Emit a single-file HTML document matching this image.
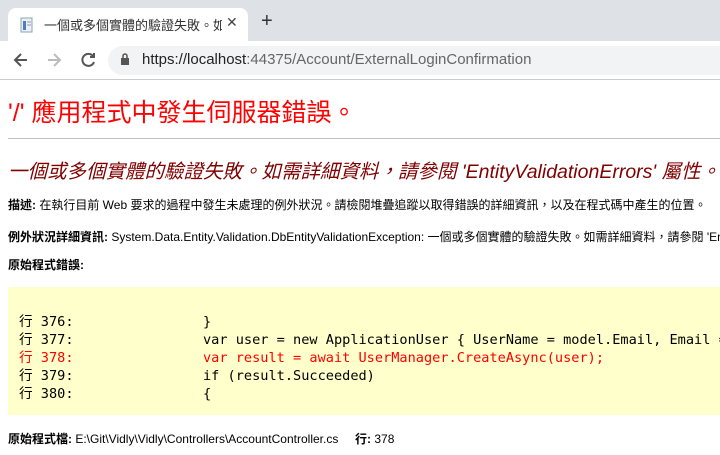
<!DOCTYPE html>
<html><head><meta charset="utf-8"><style>
*{margin:0;padding:0;box-sizing:border-box}
html,body{width:720px;height:455px;overflow:hidden}
body{background:#fff;font-family:"Liberation Sans","Noto Sans CJK TC",sans-serif;position:relative}
#wrap{position:absolute;left:0;top:0;width:720px;height:455px;overflow:hidden}
.abs{position:absolute;white-space:nowrap}
.tabbar{position:absolute;left:0;top:0;width:720px;height:41px;background:#dee1e6}
.tab{position:absolute;left:8px;top:8px;width:240px;height:33px;background:#fff;border-radius:8px 8px 0 0}
.toolbar{position:absolute;left:0;top:41px;width:720px;height:39px;background:#fff;border-bottom:1px solid #ccc}
.omni{position:absolute;left:108px;top:46px;width:640px;height:29px;background:#f1f3f4;border-radius:15px}
.mono{font-family:"DejaVu Sans Mono","Liberation Mono","Noto Sans CJK TC",monospace;font-size:13.6px}
b{font-weight:bold}
</style></head><body><div id="wrap">
<div class="tabbar"></div>
<div class="tab"></div>
<svg class="abs" style="left:20px;top:17px" width="14" height="16"><rect x="1" y="1" width="11" height="14" fill="#eef" stroke="#8aa" /><rect x="3" y="4" width="3" height="9" fill="#4a7fc0"/><line x1="7" y1="5" x2="11" y2="5" stroke="#999"/><line x1="7" y1="8" x2="11" y2="8" stroke="#999"/></svg>
<div class="abs" style="left:44px;top:15px;font-size:13px;color:#333;width:178px;overflow:hidden">一個或多個實體的驗證失敗。如需</div>
<div class="abs" style="left:226px;top:14px;font-size:14px;color:#444">✕</div>
<div class="abs" style="left:261px;top:10px;font-size:20px;color:#333">+</div>
<div class="toolbar"></div>
<svg class="abs" style="left:12px;top:51px" width="90" height="18" fill="none" stroke-width="2">
<path d="M15 9H3M9 3L3 9l6 6" stroke="#555"/>
<path d="M36 9h12M42 3l6 6-6 6" stroke="#bbb"/>
<path d="M81 5a6 6 0 1 0 1 6M82 2v4h-4" stroke="#555"/>
</svg>
<div class="omni"></div>
<svg class="abs" style="left:120px;top:53px" width="10" height="13"><rect x="1" y="5" width="8" height="7" fill="#555"/><path d="M3 5V3a2 2 0 0 1 4 0v2" stroke="#555" fill="none" stroke-width="1.5"/></svg>
<div class="abs" style="left:142px;top:51px;font-size:15px;color:#222">https://localhost<span style="color:#666">:44375/Account/ExternalLoginConfirmation</span></div>

<div class="abs" style="left:8px;top:93px;font-size:25px;color:#f00">'/' 應用程式中發生伺服器錯誤。</div>
<div class="abs" style="left:8px;top:138px;width:712px;height:1px;background:#c0c0c0"></div>
<div class="abs" style="left:8px;top:155px;font-size:19.5px;color:#800000;font-style:italic">一個或多個實體的驗證失敗。如需詳細資料，請參閱 'EntityValidationErrors' 屬性。</div>
<div class="abs" style="left:8px;top:196px;font-size:12px;color:#000"><b>描述:</b> 在執行目前 Web 要求的過程中發生未處理的例外狀況。請檢閱堆疊追蹤以取得錯誤的詳細資訊，以及在程式碼中產生的位置。</div>
<div class="abs" style="left:8px;top:228px;font-size:12px;color:#000"><b>例外狀況詳細資訊:</b> System.Data.Entity.Validation.DbEntityValidationException: 一個或多個實體的驗證失敗。如需詳細資料，請參閱 'EntityValidationErrors'</div>
<div class="abs" style="left:8px;top:256px;font-size:12px;color:#000"><b>原始程式錯誤:</b></div>
<div class="abs" style="left:8px;top:287px;width:712px;height:128px;background:#ffffcc"></div>
<div class="abs mono" style="left:19px;top:313px;line-height:18px;color:#000">行 376:<br>行 377:<br><span style="color:#f00">行 378:</span><br>行 379:<br>行 380:</div>
<div class="abs mono" style="left:203px;top:313px;line-height:18px;color:#000">}<br>var user = new ApplicationUser { UserName = model.Email, Email = model.Email };<br><span style="color:#f00">var result = await UserManager.CreateAsync(user);</span><br>if (result.Succeeded)<br>{</div>
<div class="abs" style="left:8px;top:430px;font-size:12px;color:#000"><b>原始程式檔:</b> E:\Git\Vidly\Vidly\Controllers\AccountController.cs &nbsp;&nbsp;&nbsp;&nbsp;<b>行:</b> 378</div>
</div></body></html>
